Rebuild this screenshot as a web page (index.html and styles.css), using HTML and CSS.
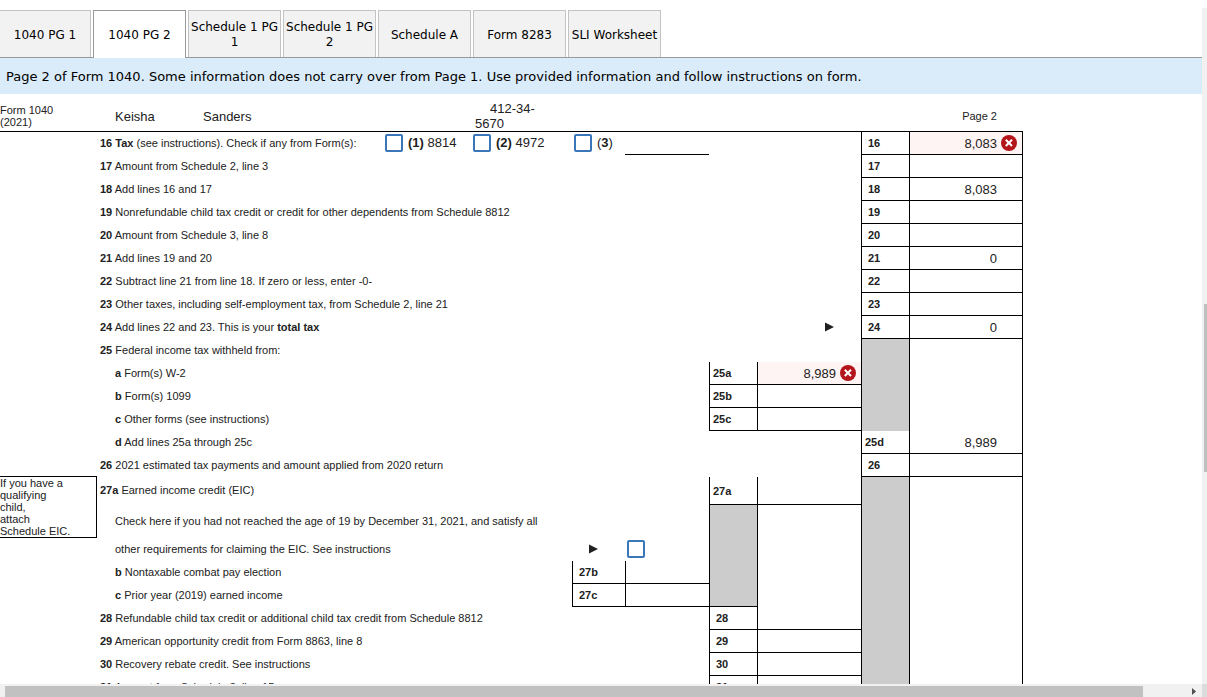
FILE: index.html
```html
<!DOCTYPE html>
<html lang="en">
<head>
<meta charset="utf-8">
<title>Form 1040 - Page 2</title>
<link rel="stylesheet" href="styles.css">
</head>
<body>
<svg class="defs" aria-hidden="true">
  <symbol id="wrong" viewBox="0 0 16 16"><circle cx="8" cy="8" r="8" fill="#b3151b"/><path d="M4.8 4.8l6.2 6.2M11 4.8l-6.2 6.2" stroke="#fff" stroke-width="2"/></symbol>
  <symbol id="arrow" viewBox="0 0 9 10"><path d="M0 0.5L9 5L0 9.5z" fill="#212121"/></symbol>
</svg>
<div class="page">
  <main class="content">
    <nav class="tabs">
      <button class="tab">1040 PG 1</button>
      <button class="tab active">1040 PG 2</button>
      <button class="tab">Schedule 1 PG 1</button>
      <button class="tab">Schedule 1 PG 2</button>
      <button class="tab">Schedule A</button>
      <button class="tab">Form 8283</button>
      <button class="tab">SLI Worksheet</button>
    </nav>
    <p class="notice">Page 2 of Form 1040. Some information does not carry over from Page 1. Use provided information and follow instructions on form.</p>
    <div class="sheet">
    <table class="form">
      <colgroup>
        <col class="c-side"><col class="c-first"><col class="c-last"><col class="c-rest"><col class="c-check"><col class="c-ssn"><col class="c-low"><col class="c-lowval"><col class="c-no"><col class="c-midval"><col class="c-no"><col class="c-val">
      </colgroup>
      <thead>
        <tr class="head">
          <td>Form 1040<br>(2021)</td>
          <td class="name">Keisha</td>
          <td class="name">Sanders</td>
          <td></td><td></td>
          <td class="ssn">412-34-<br>5670</td>
          <td colspan="5"></td>
          <td class="pageno">Page 2</td>
        </tr>
      </thead>
      <tbody>
        <tr>
          <td></td>
          <td class="text" colspan="3"><b>16 Tax</b> (see instructions). Check if any from Form(s):</td>
          <td class="option"><label class="check"><input type="checkbox"><span><b>(1)</b> 8814</span></label></td>
          <td class="option"><label class="check"><input type="checkbox"><span><b>(2)</b> 4972</span></label></td>
          <td class="option"><label class="check"><input type="checkbox"><span>(<b>3</b>)</span></label></td>
          <td class="line"><input class="amount" type="text" aria-label="Other form"></td>
          <td colspan="2"></td>
          <th class="no">16</th>
          <td class="val wrong"><input class="amount" type="text" value="8,083" aria-label="Line 16"><svg class="mark"><use href="#wrong"/></svg></td>
        </tr>
        <tr><td></td><td class="text" colspan="9"><b>17</b> Amount from Schedule 2, line 3</td><th class="no">17</th><td class="val"><input class="amount" type="text" aria-label="Line 17"></td></tr>
        <tr><td></td><td class="text" colspan="9"><b>18</b> Add lines 16 and 17</td><th class="no">18</th><td class="val"><input class="amount" type="text" value="8,083" aria-label="Line 18"></td></tr>
        <tr><td></td><td class="text" colspan="9"><b>19</b> Nonrefundable child tax credit or credit for other dependents from Schedule 8812</td><th class="no">19</th><td class="val"><input class="amount" type="text" aria-label="Line 19"></td></tr>
        <tr><td></td><td class="text" colspan="9"><b>20</b> Amount from Schedule 3, line 8</td><th class="no">20</th><td class="val"><input class="amount" type="text" aria-label="Line 20"></td></tr>
        <tr><td></td><td class="text" colspan="9"><b>21</b> Add lines 19 and 20</td><th class="no">21</th><td class="val"><input class="amount" type="text" value="0" aria-label="Line 21"></td></tr>
        <tr><td></td><td class="text" colspan="9"><b>22</b> Subtract line 21 from line 18. If zero or less, enter -0-</td><th class="no">22</th><td class="val"><input class="amount" type="text" aria-label="Line 22"></td></tr>
        <tr><td></td><td class="text" colspan="9"><b>23</b> Other taxes, including self-employment tax, from Schedule 2, line 21</td><th class="no">23</th><td class="val"><input class="amount" type="text" aria-label="Line 23"></td></tr>
        <tr><td></td><td class="text" colspan="8"><b>24</b> Add lines 22 and 23. This is your <b>total tax</b></td><td class="pointer-right"><svg class="arrow"><use href="#arrow"/></svg></td><th class="no">24</th><td class="val"><input class="amount" type="text" value="0" aria-label="Line 24"></td></tr>
        <tr><td></td><td class="text" colspan="9"><b>25</b> Federal income tax withheld from:</td><td class="gray" rowspan="4"></td><td class="blank" rowspan="4"></td></tr>
        <tr><td></td><td class="text sub" colspan="7"><b>a</b> Form(s) W-2</td><th class="no wide">25a</th><td class="val mid wrong"><input class="amount" type="text" value="8,989" aria-label="Line 25a"><svg class="mark"><use href="#wrong"/></svg></td></tr>
        <tr><td></td><td class="text sub" colspan="7"><b>b</b> Form(s) 1099</td><th class="no wide">25b</th><td class="val mid"><input class="amount" type="text" aria-label="Line 25b"></td></tr>
        <tr><td></td><td class="text sub" colspan="7"><b>c</b> Other forms (see instructions)</td><th class="no wide">25c</th><td class="val mid"><input class="amount" type="text" aria-label="Line 25c"></td></tr>
        <tr><td></td><td class="text sub" colspan="9"><b>d</b> Add lines 25a through 25c</td><th class="no wide">25d</th><td class="val"><input class="amount" type="text" value="8,989" aria-label="Line 25d"></td></tr>
        <tr><td class="line"></td><td class="text" colspan="9"><b>26</b> 2021 estimated tax payments and amount applied from 2020 return</td><th class="no">26</th><td class="val"><input class="amount" type="text" aria-label="Line 26"></td></tr>
        <tr class="eic"><td class="side-note" rowspan="2">If you have a<br>qualifying<br>child,<br>attach<br>Schedule EIC.</td><td class="text" colspan="7"><b>27a</b> Earned income credit (EIC)</td><th class="no wide">27a</th><td class="val mid"><input class="amount" type="text" aria-label="Line 27a"></td><td class="gray" rowspan="9"></td><td class="blank" rowspan="9"></td></tr>
        <tr class="tall"><td class="text sub" colspan="7">Check here if you had not reached the age of 19 by December 31, 2021, and satisfy all</td><td class="gray closed" rowspan="4"></td><td class="blank mid" rowspan="4"></td></tr>
        <tr><td></td><td class="text sub" colspan="5"><label for="eic">other requirements for claiming the EIC. See instructions</label></td><td class="pointer"><svg class="arrow"><use href="#arrow"/></svg></td><td class="option"><div class="check"><input type="checkbox" id="eic"></div></td></tr>
        <tr><td></td><td class="text sub" colspan="5"><b>b</b> Nontaxable combat pay election</td><th class="no">27b</th><td class="val mid"><input class="amount" type="text" aria-label="Line 27b"></td></tr>
        <tr><td></td><td class="text sub" colspan="5"><b>c</b> Prior year (2019) earned income</td><th class="no">27c</th><td class="val mid"><input class="amount" type="text" aria-label="Line 27c"></td></tr>
        <tr><td></td><td class="text" colspan="7"><b>28</b> Refundable child tax credit or additional child tax credit from Schedule 8812</td><th class="no">28</th><td class="val mid"><input class="amount" type="text" aria-label="Line 28"></td></tr>
        <tr><td></td><td class="text" colspan="7"><b>29</b> American opportunity credit from Form 8863, line 8</td><th class="no">29</th><td class="val mid"><input class="amount" type="text" aria-label="Line 29"></td></tr>
        <tr><td></td><td class="text" colspan="7"><b>30</b> Recovery rebate credit. See instructions</td><th class="no">30</th><td class="val mid"><input class="amount" type="text" aria-label="Line 30"></td></tr>
        <tr><td></td><td class="text" colspan="7"><b>31</b> Amount from Schedule 3, line 15</td><th class="no">31</th><td class="val mid"><input class="amount" type="text" aria-label="Line 31"></td></tr>
      </tbody>
    </table>
    </div>
  </main>
  <div class="bar-v"><div class="thumb-v"></div></div>
  <div class="bar-h"><div class="thumb-h"></div><svg class="step" viewBox="0 0 4 7"><path d="M0 0L4 3.5L0 7z" fill="#505050"/></svg></div>
  <div class="corner"></div>
</div>
</body>
</html>
```
FILE: styles.css
```css
* { box-sizing: border-box; }

body {
  margin: 0;
  background: #fff;
  color: #212121;
  font-family: "Liberation Sans", Arial, sans-serif;
  font-size: 11px;
  line-height: 12px;
}

.defs { display: none; }

.page {
  display: grid;
  grid-template-columns: minmax(0, 1fr) 5px;
  grid-template-rows: minmax(0, 1fr) 13px;
  height: 100vh;
}

.content { overflow: hidden; padding-top: 10px; }

/* Tabs */
.tabs {
  display: flex;
  gap: 2px;
  height: 48px;
  border-bottom: 1px solid #999;
}

.tab {
  width: 93px;
  height: 47px;
  padding: 2px 0 0;
  border: 1px solid #c3c3c3;
  border-bottom: 0;
  background: #f2f2f2;
  color: #000;
  font: 12px/15px "DejaVu Sans", Verdana, sans-serif;
}

.tab:first-child { width: 91px; border-left: 0; }

.tab.active {
  height: 48px;
  border-color: #999;
  background: #fff;
}

.notice {
  margin: 0;
  padding: 11px 6px 9px;
  background: #daecf9;
  color: #000;
  font: 13px/16px "DejaVu Sans", Verdana, sans-serif;
}

/* Form table */
.sheet { padding: 7px 179px 0 0; }

.form {
  width: 100%;
  min-width: 920px;
  table-layout: fixed;
  border-collapse: separate;
  border-spacing: 0;
}

.c-side { width: 97px; }
.c-first { width: 88px; }
.c-last { width: 93px; }
.c-check { width: 88px; }
.c-ssn { width: 101px; }
.c-low { width: 53px; }
.c-lowval { width: 84px; }
.c-no { width: 48px; }
.c-midval { width: 104px; }
.c-val { width: 114px; }

.form td, .form th { height: 23px; padding: 0; text-align: left; vertical-align: middle; }

.form .head td { height: 31px; border-bottom: 1px solid #000; }
.form .eic td, .form .eic th { height: 28px; }
.form .tall td { height: 33px; }

.form .head .name { padding: 2px 0 0 18px; font-size: 13px; }
.form .ssn { padding-left: 4px; font-size: 13px; line-height: 15px; text-indent: 15px; }
.form .head .pageno { padding-right: 26px; text-align: right; }

.form .text { padding: 0 0 2px 3px; white-space: nowrap; }
.form .sub { padding-left: 18px; }

.form .no { padding-left: 6px; border-left: 1px solid #000; border-bottom: 1px solid #000; }
.form .wide { padding-left: 3px; }

.form .val {
  position: relative;
  border-left: 1px solid #000;
  border-right: 1px solid #000;
  border-bottom: 1px solid #000;
}

.form .blank { border-left: 1px solid #000; border-right: 1px solid #000; }
.form .mid { border-right: 0; }
.form .line { border-bottom: 1px solid #000; }
.form .gray { border-left: 1px solid #000; background: #ccc; }
.form .closed { border-bottom: 1px solid #000; }
.form .wrong { background: #fff4f4; }

.form .eic .side-note { height: 60px; border: 1px solid #000; border-width: 0 1px 1px 0; }

.amount {
  display: block;
  width: 100%;
  height: 22px;
  padding: 0 25px 0 4px;
  border: 0;
  background: transparent;
  color: #212121;
  font: 13px/15px "Liberation Sans", Arial, sans-serif;
  text-align: right;
}

.mark { position: absolute; top: 3px; right: 5px; width: 16px; height: 16px; }

.arrow { display: block; width: 9px; height: 10px; }
.form .pointer { padding: 0 0 2px 17px; }
.form .pointer-right { padding: 0 27px 2px 0; }
.pointer-right .arrow { margin-left: auto; }

.form .option { padding-bottom: 2px; }
.check { display: flex; align-items: center; gap: 5px; padding-left: 2px; font-size: 13px; line-height: 15px; }

.check input {
  appearance: none;
  width: 18px;
  height: 18px;
  margin: 0;
  border: 2px solid #3a76b8;
  border-radius: 2px;
  background: #fff;
}

/* Scroll bars */
.bar-v { margin-top: 8px; padding: 296px 0 0 2px; background: #f1f1f1; }
.thumb-v { height: 168px; background: #c1c1c1; }

.bar-h {
  display: flex;
  align-items: center;
  justify-content: space-between;
  padding: 2px 6px 0 5px;
  background: #f1f1f1;
}

.thumb-h { width: calc(100% - 53px); height: 11px; background: #c1c1c1; }
.step { width: 4px; height: 7px; }
.corner { background: #dcdcdc; }
```
